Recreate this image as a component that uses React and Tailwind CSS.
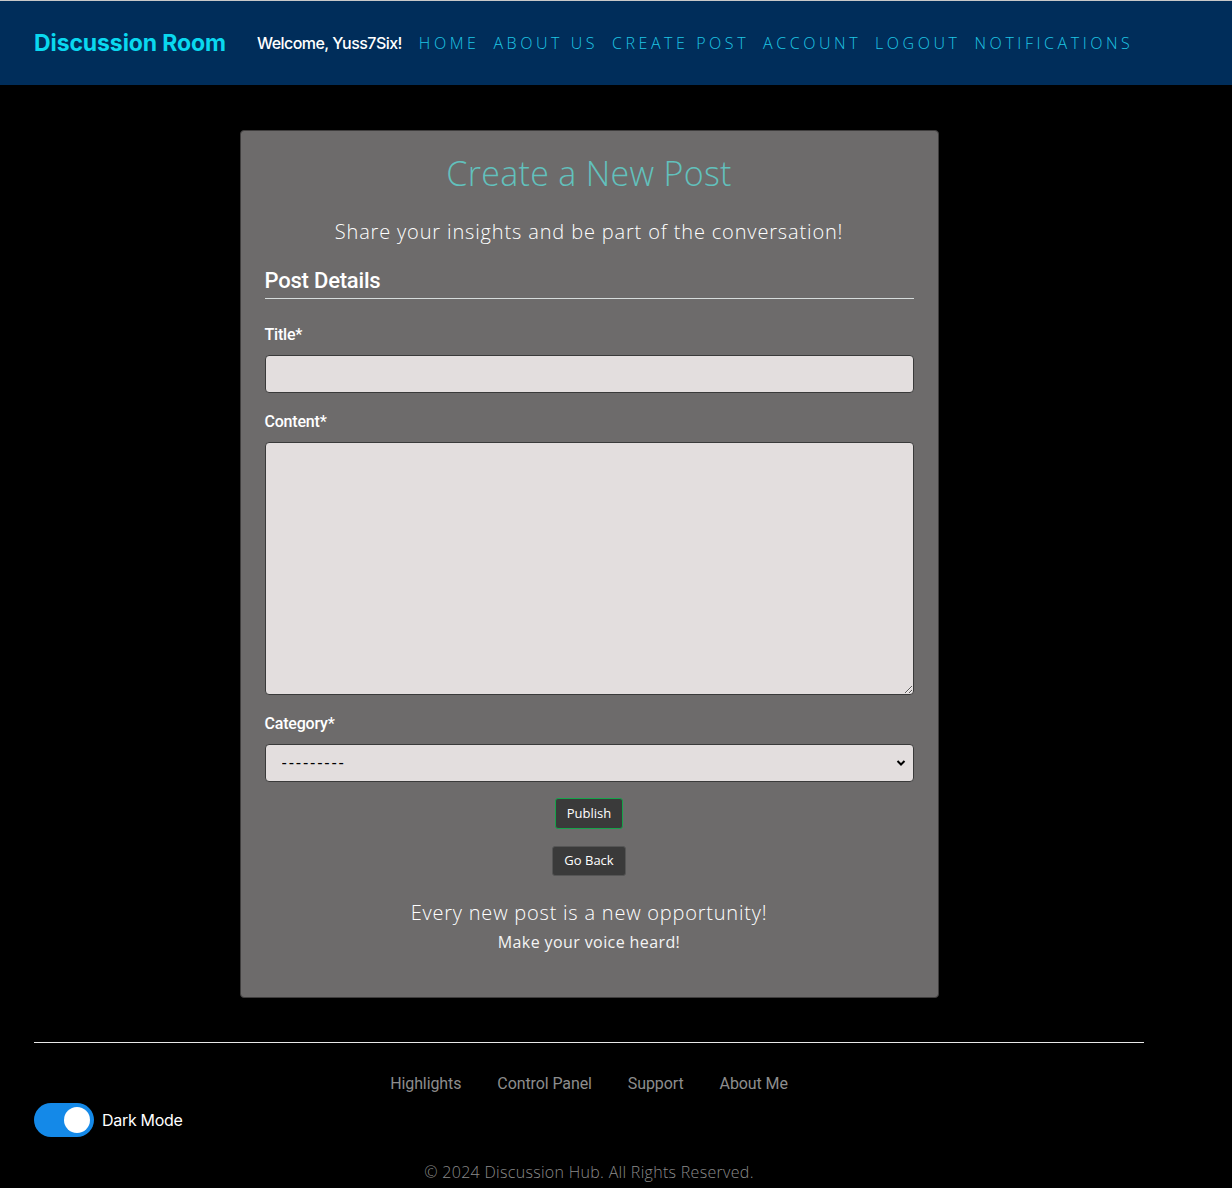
import React, { useState } from 'react';

const poppins = { fontFamily: '"Open Sans", "Noto Sans", sans-serif' };

function Header() {
  const links = ['HOME', 'ABOUT US', 'CREATE POST', 'ACCOUNT', 'LOGOUT', 'NOTIFICATIONS'];
  return (
    <header className="border-t border-[#c8c8c8] bg-[#002d5a] h-[85px] flex items-center px-[34px]">
      <a className="font-['Inter',sans-serif] font-bold text-[23px] text-[#0ad8ef] tracking-[-0.1px] mr-[31px]">
        Discussion Room
      </a>
      <span className="font-['Inter',sans-serif] font-medium text-[16px] text-white mr-[17px] tracking-[-0.55px]">
        Welcome, Yuss7Six!
      </span>
      <nav className="flex gap-[14px]">
        {links.map((l) => (
          <a key={l} className="font-['Open_Sans',sans-serif] font-light text-[16px] tracking-[0.222em] text-[#1fc6e4]">
            {l}
          </a>
        ))}
      </nav>
    </header>
  );
}

function Field({ label, first, children }) {
  return (
    <div className={first ? 'mt-[26px]' : 'mt-[19px]'}>
      <label className="block font-['Roboto',sans-serif] font-medium text-[16px] text-white mb-[10px] leading-[20px] tracking-[-0.2px]">
        {label}
      </label>
      {children}
    </div>
  );
}

export default function App() {
  const [dark, setDark] = useState(true);
  const [title, setTitle] = useState('');
  const [content, setContent] = useState('');

  return (
    <div className="min-h-screen bg-black">
      <Header />
      <div className="w-[1178px]">
        <main className="pt-[45px] flex justify-center">
          <div className="w-[699px] bg-[#6d6b6b] border border-[#3f3d3d] rounded-[4px] px-[24px] pt-[21px] pb-[43px]">
            <h1
              style={poppins}
              className="text-center font-light text-[34px] leading-[42px] tracking-[0.3px] text-[#62c1bd]"
            >
              Create a New Post
            </h1>
            <p style={poppins} className="text-center font-light text-[20px] text-white mt-[24px] leading-[28px] tracking-[0.85px]">
              Share your insights and be part of the conversation!
            </p>
            <h2 className="font-['Roboto',sans-serif] font-medium text-[22px] text-white mt-[21px] leading-[28px] pb-[3px] border-b border-[#d6dcdc] tracking-[-0.2px]">
              Post Details
            </h2>
            <form>
              <Field label="Title*" first>
                <input
                  value={title}
                  onChange={(e) => setTitle(e.target.value)}
                  className="w-full h-[38px] bg-[#e3dede] border border-[#3a3a3a] rounded-[4px] px-3"
                />
              </Field>
              <Field label="Content*">
                <textarea
                  value={content}
                  onChange={(e) => setContent(e.target.value)}
                  className="block w-full h-[253px] bg-[#e3dede] border border-[#3a3a3a] rounded-[4px] px-3 py-2"
                />
              </Field>
              <Field label="Category*">
                <div className="relative">
                  <select className="block appearance-none w-full h-[38px] bg-[#e3dede] border border-[#3a3a3a] rounded-[4px] pl-[16px] text-[16px] tracking-[1.8px] text-black font-['Liberation_Sans',sans-serif]">
                    <option>---------</option>
                  </select>
                  <svg className="absolute right-[8px] top-[15px] pointer-events-none" width="10" height="8" viewBox="0 0 10 8">
                    <path d="M1.5 2l3.5 3.5L8.5 2" stroke="#000" strokeWidth="2" fill="none" />
                  </svg>
                </div>
              </Field>
              <div className="flex flex-col items-center mt-[16px] gap-[17px]">
                <button
                  type="button"
                  style={poppins}
                  className="h-[31px] px-[11px] bg-[#3a3a3a] border border-[#16a34a] rounded-[3px] text-[13px] text-white"
                >
                  Publish
                </button>
                <button
                  type="button"
                  style={poppins}
                  className="h-[30px] px-[11px] bg-[#3a3a3a] border border-[#555] rounded-[3px] text-[13px] text-white"
                >
                  Go Back
                </button>
              </div>
            </form>
            <p style={poppins} className="text-center font-light text-[20px] text-white mt-[23px] leading-[28px] tracking-[0.78px]">
              Every new post is a new opportunity!
            </p>
            <p style={poppins} className="text-center text-[16px] text-[#f4f4f4] mt-[3px] leading-[24px] tracking-[0.4px]">
              Make your voice heard!
            </p>
          </div>
        </main>

        <footer className="px-[34px] pt-[44px] pb-[6px]">
          <hr className="border-t border-[#e8e8e8]" />
          <div className="flex justify-center gap-[36px] mt-[29px]">
            {['Highlights', 'Control Panel', 'Support', 'About Me'].map((l) => (
              <a key={l} className="font-['Roboto',sans-serif] text-[16px] text-[#8d8d8d] tracking-[-0.1px]">
                {l}
              </a>
            ))}
          </div>
          <div className="flex items-center mt-[7px] gap-[8px]">
            <button
              type="button"
              onClick={() => setDark(!dark)}
              className={'w-[60px] h-[34px] rounded-full flex items-center px-[4px] ' + (dark ? 'bg-[#1489e8] justify-end' : 'bg-[#ccc] justify-start')}
            >
              <span className="w-[26px] h-[26px] rounded-full bg-white" />
            </button>
            <span className="font-['Inter',sans-serif] text-[16px] text-white tracking-[-0.3px]">Dark Mode</span>
          </div>
          <p style={poppins} className="text-center font-light text-[16px] text-[#8a8a8a] mt-[23px] leading-[24px] tracking-[0.3px]">
            © 2024 Discussion Hub. All Rights Reserved.
          </p>
        </footer>
      </div>
    </div>
  );
}
